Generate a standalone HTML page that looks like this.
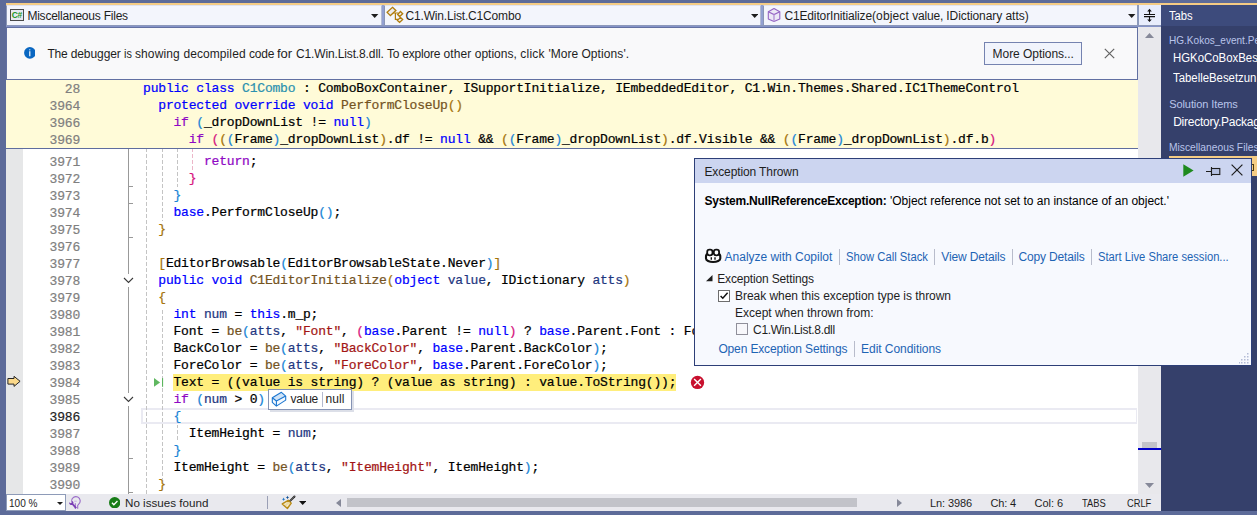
<!DOCTYPE html><html><head><meta charset="utf-8"><title>Visual Studio</title><style>
html,body{margin:0;padding:0;background:#5d6b99}
body{width:1257px;height:515px;position:relative;overflow:hidden;background:#5d6b99;font-family:'Liberation Sans', sans-serif;}
div,span,svg{position:absolute;box-sizing:border-box}
.cl span,.hl span{position:static}
.t{white-space:pre}
.ln{left:24px;width:56px;text-align:right;font:13px/17px 'Liberation Mono', monospace;letter-spacing:-0.186px;color:#7f7f7f;height:17px;-webkit-text-stroke:0.22px}
.ln.cur{color:#1e1e1e}
.cl{left:127.8px;font:13px/17px 'Liberation Mono', monospace;letter-spacing:-0.186px;white-space:pre;color:#000;height:17px;-webkit-text-stroke:0.22px}
.kw{color:#0000ff}.ctl{color:#8f08c4}.typ{color:#2b91af}.fn{color:#74531f}.var{color:#1f377f}.st{color:#a31515}
.b1{color:#a5740b}.b2{color:#1a85d6}.b3{color:#d6157e}
.hl{position:static;background:#ffee7c;display:inline-block;height:17px;margin-left:-0.700px;padding-left:0.700px}
.hl span{color:#000}
.g{width:1px;background:repeating-linear-gradient(to bottom,#b9b9b9 0 3px,transparent 3px 5px)}
.sep{width:1px;background:#b8bccb}
</style></head><body>
<div style="left:6px;top:3px;width:1251px;height:2px;background:#f5cc84"></div>
<div style="left:1161px;top:5px;width:96px;height:506px;background:#35406b"></div>
<div style="left:1161px;top:5px;width:96px;height:21px;background:#3d4b7c"></div>
<div style="left:1169px;top:156px;width:88px;height:20px;background:#f5cc84"></div>
<div style="left:1251px;top:164px;width:3px;height:7px;border:1px solid #4a3a10;border-left:none"></div>
<div style="left:6px;top:5px;width:1155px;height:21px;background:#93a0d2"></div>
<div style="left:6px;top:5px;width:376px;height:20px;background:#f3f5fc;border-left:1px solid #8a96b6;border-right:1px solid #b4bcd4;border-top:1px solid #dfe3f2"></div>
<div style="left:384px;top:5px;width:377px;height:20px;background:#f3f5fc;border-left:1px solid #8a96b6;border-right:1px solid #b4bcd4;border-top:1px solid #dfe3f2"></div>
<div style="left:763px;top:5px;width:376px;height:20px;background:#f3f5fc;border-left:1px solid #8a96b6;border-right:1px solid #b4bcd4;border-top:1px solid #dfe3f2"></div>
<div style="left:1137px;top:5px;width:2px;height:21px;background:#8b99bb"></div>
<div style="left:1139px;top:5px;width:22px;height:21px;background:#e8edfc"></div>
<div style="left:6px;top:25px;width:1155px;height:1px;background:#8c98ba"></div>
<div style="left:6px;top:26px;width:1155px;height:2px;background:#8593c8"></div>
<svg style="left:371.3px;top:14px" width="7.4" height="4" viewBox="0 0 7.4 4"><path d="M0 0h7.400L3.700 4z" fill="#1e1e1e"/></svg>
<svg style="left:750.8px;top:14px" width="7.4" height="4" viewBox="0 0 7.4 4"><path d="M0 0h7.400L3.700 4z" fill="#1e1e1e"/></svg>
<svg style="left:1128.3px;top:14px" width="7.4" height="4" viewBox="0 0 7.4 4"><path d="M0 0h7.400L3.700 4z" fill="#1e1e1e"/></svg>
<div style="left:1138px;top:27px;width:23px;height:467px;background:#e8e8ec"></div>
<div style="left:6px;top:27px;width:1132px;height:53px;background:#f9f9fa;border:1px solid #6270a2"></div>
<div style="left:984px;top:42px;width:98px;height:23px;background:#f1f4fc;border:1px solid #7583b0"></div>
<div style="left:6px;top:80px;width:1132px;height:68px;background:#fffbd8"></div>
<div style="left:6px;top:148px;width:1132px;height:1px;background:#5f6d9e"></div>
<div id="code" style="left:6px;top:149px;width:1132px;height:345px;background:#fff;overflow:hidden">
<div style="left:0;top:0;width:17px;height:345px;background:#e6e7e8"></div>
<div id="cv" style="left:-6px;top:0;width:1138px;height:345px">
<div style="left:141px;top:259px;width:996px;height:16px;border:2px solid #eaeaf2;border-right-width:1px"></div>
<div style="left:146px;top:0px;width:1px;height:345px;background:linear-gradient(to bottom,#c4c4c4 0 4px,transparent 4px 6px) 0 -1px/1px 6px repeat-y"></div>
<div style="left:162px;top:0px;width:1px;height:72px;background:linear-gradient(to bottom,#c4c4c4 0 4px,transparent 4px 6px) 0 -1px/1px 6px repeat-y"></div>
<div style="left:162px;top:159px;width:1px;height:171px;background:linear-gradient(to bottom,#c4c4c4 0 4px,transparent 4px 6px) 0 -4px/1px 6px repeat-y"></div>
<div style="left:177px;top:0px;width:1px;height:38px;background:linear-gradient(to bottom,#c4c4c4 0 4px,transparent 4px 6px) 0 -1px/1px 6px repeat-y"></div>
<div style="left:177px;top:276px;width:1px;height:17px;background:linear-gradient(to bottom,#c4c4c4 0 4px,transparent 4px 6px) 0 -1px/1px 6px repeat-y"></div>
<div style="left:192px;top:0px;width:1px;height:21px;background:linear-gradient(to bottom,#ecb6c8 0 4px,transparent 4px 6px) 0 -1px/1px 6px repeat-y"></div>
<div style="left:128px;top:0px;width:1px;height:125px;background:#999999"></div>
<div style="left:128px;top:37px;width:5px;height:1px;background:#999999"></div>
<div style="left:128px;top:54px;width:5px;height:1px;background:#999999"></div>
<div style="left:128px;top:88px;width:5px;height:1px;background:#999999"></div>
<div style="left:128px;top:138px;width:1px;height:106px;background:#999999"></div>
<div style="left:128px;top:257px;width:1px;height:88px;background:#999999"></div>
<div style="left:128px;top:309px;width:5px;height:1px;background:#999999"></div>
<div style="left:128px;top:343px;width:5px;height:1px;background:#999999"></div>
<svg style="left:123px;top:128px" width="11" height="7" viewBox="0 0 11 7"><path d="M1 1l4.5 4.5L10 1" fill="none" stroke="#3a3a3a" stroke-width="1.1"/></svg>
<svg style="left:123px;top:247px" width="11" height="7" viewBox="0 0 11 7"><path d="M1 1l4.5 4.5L10 1" fill="none" stroke="#3a3a3a" stroke-width="1.1"/></svg>
<div class="ln" style="top:-12.3px">3970</div>
<div class="ln" style="top:4.7px">3971</div>
<div class="cl" style="top:4.0px">          <span class="ctl">return</span>;</div>
<div class="ln" style="top:21.7px">3972</div>
<div class="cl" style="top:21.0px">        <span class="b3">}</span></div>
<div class="ln" style="top:38.7px">3973</div>
<div class="cl" style="top:38.0px">      <span class="b2">}</span></div>
<div class="ln" style="top:55.7px">3974</div>
<div class="cl" style="top:55.0px">      <span class="kw">base</span>.PerformCloseUp<span class="b2">()</span>;</div>
<div class="ln" style="top:72.7px">3975</div>
<div class="cl" style="top:72.0px">    <span class="b1">}</span></div>
<div class="ln" style="top:89.7px">3976</div>
<div class="ln" style="top:106.7px">3977</div>
<div class="cl" style="top:106.0px">    <span class="b1">[</span>EditorBrowsable<span class="b2">(</span>EditorBrowsableState.Never<span class="b2">)</span><span class="b1">]</span></div>
<div class="ln" style="top:123.7px">3978</div>
<div class="cl" style="top:123.0px">    <span class="kw">public void </span><span class="fn">C1EditorInitialize</span><span class="b1">(</span><span class="kw">object </span><span class="var">value</span>, IDictionary <span class="var">atts</span><span class="b1">)</span></div>
<div class="ln" style="top:140.7px">3979</div>
<div class="cl" style="top:140.0px">    <span class="b1">{</span></div>
<div class="ln" style="top:157.7px">3980</div>
<div class="cl" style="top:157.0px">      <span class="kw">int </span><span class="var">num</span> = <span class="kw">this</span>.m_p;</div>
<div class="ln" style="top:174.7px">3981</div>
<div class="cl" style="top:174.0px">      Font = <span class="fn">be</span><span class="b2">(</span><span class="var">atts</span>, <span class="st">&quot;Font&quot;</span>, <span class="b3">(</span><span class="kw">base</span>.Parent != <span class="kw">null</span><span class="b3">)</span> ? <span class="kw">base</span>.Parent.Font : Font<span class="b2">)</span>;</div>
<div class="ln" style="top:191.7px">3982</div>
<div class="cl" style="top:191.0px">      BackColor = <span class="fn">be</span><span class="b2">(</span><span class="var">atts</span>, <span class="st">&quot;BackColor&quot;</span>, <span class="kw">base</span>.Parent.BackColor<span class="b2">)</span>;</div>
<div class="ln" style="top:208.7px">3983</div>
<div class="cl" style="top:208.0px">      ForeColor = <span class="fn">be</span><span class="b2">(</span><span class="var">atts</span>, <span class="st">&quot;ForeColor&quot;</span>, <span class="kw">base</span>.Parent.ForeColor<span class="b2">)</span>;</div>
<div class="ln" style="top:225.7px">3984</div>
<div class="cl" style="top:225.0px">      <span class="hl">Text = <span class="b2">(</span><span class="b3">(</span><span class="var">value</span><span class="kw"> is string</span><span class="b3">)</span> ? <span class="b3">(</span><span class="var">value</span><span class="kw"> as string</span><span class="b3">)</span> : <span class="var">value</span>.<span class="fn">ToString</span><span class="b3">()</span><span class="b2">)</span>;</span></div>
<div class="ln" style="top:242.7px">3985</div>
<div class="cl" style="top:242.0px">      <span class="ctl">if </span><span class="b2">(</span><span class="var">num</span> &gt; 0<span class="b2">)</span></div>
<div class="ln cur" style="top:259.7px">3986</div>
<div class="cl" style="top:259.0px">      <span class="b2">{</span></div>
<div class="ln" style="top:276.7px">3987</div>
<div class="cl" style="top:276.0px">        ItemHeight = <span class="var">num</span>;</div>
<div class="ln" style="top:293.7px">3988</div>
<div class="cl" style="top:293.0px">      <span class="b2">}</span></div>
<div class="ln" style="top:310.7px">3989</div>
<div class="cl" style="top:310.0px">      ItemHeight = <span class="fn">be</span><span class="b2">(</span><span class="var">atts</span>, <span class="st">&quot;ItemHeight&quot;</span>, ItemHeight<span class="b2">)</span>;</div>
<div class="ln" style="top:327.7px">3990</div>
<div class="cl" style="top:327.0px">    <span class="b1">}</span></div>
<svg style="left:6px;top:225px" width="16" height="14" viewBox="6 374 16 14"><path d="M7.900 378.500H14V376.300L20.100 381.300 14 386.400V384.100H7.900z" fill="#fbd98a" stroke="#262626" stroke-width="1" stroke-linejoin="miter"/></svg>
<svg style="left:153px;top:228px" width="12" height="11" viewBox="153 377 12 11"><path d="M154 378.100L160.100 382.400 154 386.800z" fill="#5fb760"/><rect x="162" y="378.100" width="1.100" height="8.700" fill="#5cb55e"/></svg>
<svg style="left:690px;top:226px" width="15" height="15" viewBox="690 375 15 15"><circle cx="697.500" cy="382.450" r="6.650" fill="#c8102e"/><path d="M694.100 379.100l6.800 6.700M700.900 379.100l-6.800 6.700" stroke="#fff" stroke-width="1.400"/></svg>
</div></div>
<div class="ln" style="top:80.7px">28</div>
<div class="cl" style="top:80.0px">  <span class="kw">public class </span><span class="typ">C1Combo</span> : ComboBoxContainer, ISupportInitialize, IEmbeddedEditor, C1.Win.Themes.Shared.IC1ThemeControl</div>
<div class="ln" style="top:97.7px">3964</div>
<div class="cl" style="top:97.0px">    <span class="kw">protected override void </span><span class="fn">PerformCloseUp</span><span class="b1">()</span></div>
<div class="ln" style="top:114.7px">3966</div>
<div class="cl" style="top:114.0px">      <span class="ctl">if </span><span class="b2">(</span>_dropDownList != <span class="kw">null</span><span class="b2">)</span></div>
<div class="ln" style="top:131.7px">3969</div>
<div class="cl" style="top:131.0px">        <span class="ctl">if </span><span class="b3">(</span><span class="b1">(</span><span class="b2">(</span>Frame<span class="b2">)</span>_dropDownList<span class="b1">)</span>.df != <span class="kw">null</span> &amp;&amp; <span class="b1">(</span><span class="b2">(</span>Frame<span class="b2">)</span>_dropDownList<span class="b1">)</span>.df.Visible &amp;&amp; <span class="b1">(</span><span class="b2">(</span>Frame<span class="b2">)</span>_dropDownList<span class="b1">)</span>.df.b<span class="b3">)</span></div>
<div style="left:270px;top:391px;width:84px;height:21px;background:#dcdfe8"></div>
<div style="left:268px;top:389px;width:84px;height:21px;background:#ffffff;border:1px solid #8593b4"></div>
<svg style="left:270px;top:390px" width="18" height="18" viewBox="270 390 18 18"><path d="M272.300 397.700L281.400 392.300 285.700 396.100 276.400 401z" fill="#cfe3f7"/><path d="M272.300 397.700L276.400 401 276.400 406.100 272.300 402.300zM276.400 401L285.700 396.100 285.700 400.100 276.400 406.100z" fill="#f4f9fe"/><path d="M272.300 397.700L281.400 392.300 285.700 396.100V400.100L276.400 406.100 272.300 402.300zM272.300 397.700L276.400 401 285.700 396.100M276.400 401V406.100" fill="none" stroke="#1b76d0" stroke-width="1.100" stroke-linejoin="round"/></svg>
<div style="left:322px;top:392px;width:1px;height:15px;background:#b4bace"></div>
<div style="left:694px;top:158px;width:558px;height:208px;background:#f7f9fe;border:1px solid #2d3f78"></div>
<div style="left:695px;top:159px;width:556px;height:24px;background:#ccd5f0"></div>
<svg style="left:1182.5px;top:164px" width="11" height="13" viewBox="0 0 11 13"><path d="M0.3 0.2L10.6 6.5 0.3 12.8z" fill="#1e8a1e"/></svg>
<svg style="left:1206px;top:166px" width="15" height="11" viewBox="0 0 15 11"><path d="M0 5.5h5.5M5.5 1v9" stroke="#1e1e1e" stroke-width="1.1" fill="none"/><rect x="5.5" y="2.5" width="8.3" height="6" fill="#b6c2e2" stroke="#1e1e1e" stroke-width="1.1"/></svg>
<svg style="left:1231.200px;top:164px" width="12" height="12" viewBox="0 0 12 12"><path d="M0.6 0.6l10.8 10.8M11.4 0.6L0.6 11.4" stroke="#1e1e1e" stroke-width="1.2" fill="none"/></svg>
<svg style="left:704px;top:248px" width="19" height="16" viewBox="704 248 19 16"><path d="M706 256.500C706 253.800 707.500 253 713.100 253 718.800 253 720.300 253.800 720.300 256.500V258.400C720.300 260.400 717 262 713.100 262 709.200 262 706 260.400 706 258.400z" fill="#fff" stroke="#111" stroke-width="2.100"/><rect x="707.200" y="249.700" width="5.300" height="5.600" rx="2.300" fill="#fff" stroke="#111" stroke-width="1.800"/><rect x="713.800" y="249.700" width="5.300" height="5.600" rx="2.300" fill="#fff" stroke="#111" stroke-width="1.800"/><path d="M711.300 257.300v2.500M715 257.300v2.500" stroke="#111" stroke-width="1.400"/></svg>
<div class="sep" style="left:839px;top:249px;height:16px"></div>
<div class="sep" style="left:934px;top:249px;height:16px"></div>
<div class="sep" style="left:1012px;top:249px;height:16px"></div>
<div class="sep" style="left:1091px;top:249px;height:16px"></div>
<div class="sep" style="left:854px;top:341px;height:16px"></div>
<svg style="left:705.800px;top:274.600px" width="7" height="7" viewBox="0 0 7 7"><path d="M6.500 0v6.300H0z" fill="#1e1e1e"/></svg>
<div style="left:718px;top:290px;width:12px;height:12px;background:#fff;border:1px solid #6d6d6d"></div>
<svg style="left:720px;top:292.200px" width="9" height="8" viewBox="0 0 9 8"><path d="M0.600 3.900l2.200 2.300L7.600 0.700" fill="none" stroke="#111" stroke-width="1.500"/></svg>
<div style="left:736px;top:323px;width:12px;height:12px;background:#f7f7fb;border:1px solid #8f8f9a"></div>
<svg style="left:1239px;top:353px" width="11" height="11" viewBox="0 0 11 11"><g fill="#b4bcd6"><rect x="8" y="0" width="1.5" height="1.5"/><rect x="5" y="3" width="1.5" height="1.5"/><rect x="8" y="3" width="1.5" height="1.5"/><rect x="2" y="6" width="1.5" height="1.5"/><rect x="5" y="6" width="1.5" height="1.5"/><rect x="8" y="6" width="1.5" height="1.5"/><rect x="0" y="9" width="1" height="1.5"/><rect x="2" y="9" width="1.5" height="1.5"/><rect x="5" y="9" width="1.5" height="1.5"/><rect x="8" y="9" width="1.5" height="1.5"/></g></svg>
<div style="left:6px;top:494px;width:1155px;height:17px;background:#e9e9ee"></div>
<div style="left:6px;top:494px;width:60px;height:17px;background:#fff;border:1px solid #8e9bb8"></div>
<svg style="left:57px;top:502px" width="6" height="3" viewBox="0 0 6 3"><path d="M0 0h6L3 3z" fill="#1e1e1e"/></svg>
<svg style="left:68px;top:496px" width="14" height="14" viewBox="68 496 14 14"><path d="M71.600 500.800A4.300 4.300 0 1 1 78.700 504.200L77.700 505.400V508.700M75.300 508.700V503.300" stroke="#9a6cc8" fill="none" stroke-width="1.100"/><path d="M74.200 501.200h2.600" stroke="#c3a8e0" stroke-width="0.900"/><path d="M69.200 502.200a2.300 2.300 0 0 0 3 2.700l3.300 3.800 1.400-1.200-3.500-3.800a2.300 2.300 0 0 0-2.500-3l1 1.500-1.200 1.100z" fill="#7b3fb5"/></svg>
<svg style="left:108.800px;top:496.800px" width="11.400" height="11.400" viewBox="0 0 12 12"><circle cx="6" cy="6" r="6" fill="#177c17"/><path d="M3.100 6.100l2 2L8.900 4.300" fill="none" stroke="#fff" stroke-width="1.400"/></svg>
<div style="left:267px;top:496px;width:1px;height:13px;background:#9a9fb5"></div>
<svg style="left:280px;top:494px" width="17" height="16" viewBox="280 494 17 16"><path d="M294.500 496.500L289.900 501.100" stroke="#2b2b2b" stroke-width="2" stroke-linecap="round"/><path d="M294.300 496.700L290.300 500.700" stroke="#e6e6e6" stroke-width="0.700" stroke-dasharray="0.700 0.800"/><path d="M288.300 500.200L291.300 503.100 287.400 508.500 282.200 503.900z" fill="#ecd9a4" stroke="#b98a14" stroke-width="1.300" stroke-linejoin="round"/><path d="M284.800 504.600l1.500-1.800M286.800 506.300l1.600-2" stroke="#f7efd6" stroke-width="0.900"/><path d="M283.600 497.600l0.550 1.150 1.150 0.550-1.150 0.550-0.550 1.150-0.550-1.150-1.150-0.550 1.150-0.550z" fill="#1b74c8"/><path d="M287.500 495.800l0.550 1.150 1.150 0.550-1.150 0.550-0.550 1.150-0.550-1.150-1.150-0.550 1.150-0.550z" fill="#0f4f95"/></svg>
<svg style="left:299px;top:501px" width="7.400" height="4" viewBox="0 0 7.400 4"><path d="M0 0h7.400L3.700 4z" fill="#111"/></svg>
<svg style="left:336px;top:498.500px" width="5" height="8" viewBox="0 0 5 8"><path d="M5 0v8L0 4z" fill="#868999"/></svg>
<div style="left:347px;top:498px;width:510px;height:9px;background:#c2c3c9"></div>
<svg style="left:897px;top:498.500px" width="5" height="8" viewBox="0 0 5 8"><path d="M0 0v8l5-4z" fill="#868999"/></svg>
<div style="left:10px;top:9px;width:14px;height:12px;border:1px solid #4a4a4a;background:#e6e8f0"></div>
<span class="t" style="left:11.700px;top:9.300px;font-size:8.500px;line-height:12px;font-weight:700;color:#1c961c;letter-spacing:-0.400px">C#</span>
<svg style="left:384px;top:4px" width="24" height="22" viewBox="384 4 24 22"><g fill="#ecebee" stroke="#b07c0b" stroke-width="1.300" stroke-linejoin="miter"><path d="M392.500 7.300L395.900 10.500 390.400 15.600 387.100 12.300z"/><path d="M400.500 11.500L402.700 13.700 399.600 16.500 397.600 14.500z"/><path d="M400.500 17.400L402.700 19.500 399.600 22.400 397.400 20.400z"/></g><path d="M393.300 13h5M395.400 13v6.300h2.800" fill="none" stroke="#b07c0b" stroke-width="1.200"/></svg>
<svg style="left:763px;top:4px" width="24" height="22" viewBox="763 4 24 22"><path d="M774 8.600L779.800 11.800V18.900L774 21.400 768.300 18.900V11.800z" fill="#ece8f6" stroke="#9464c4" stroke-width="1.100" stroke-linejoin="round"/><path d="M768.300 11.800L774 14.600 779.800 11.800" fill="none" stroke="#9464c4" stroke-width="1.100"/><path d="M774 14.600V21.400" fill="none" stroke="#b99ad8" stroke-width="1.500"/></svg>
<svg style="left:1143px;top:8px" width="14" height="15" viewBox="1143 8 14 15"><path d="M1144 14.500h11M1144 16.600h11M1149.500 10v4M1149.500 17v4" stroke="#111" stroke-width="1.100" fill="none"/><path d="M1149.500 8.800l2.300 2.600h-4.600zM1149.500 22l2.300-2.600h-4.600z" fill="#111"/></svg>
<svg style="left:23.700px;top:47.100px" width="11.800" height="11.800" viewBox="0 0 12 12"><circle cx="6" cy="6" r="5.900" fill="#0a67c1"/><path d="M5.900 2.200v1.300" stroke="#fff" stroke-width="0.900"/><path d="M5.900 4.300v5.200" stroke="#fff" stroke-width="1.200"/></svg>
<svg style="left:1103.500px;top:47.800px" width="11" height="11" viewBox="0 0 11 11"><path d="M0.800 0.800l9.400 9.400M10.200 0.800L0.800 10.200" stroke="#636363" stroke-width="1.200" fill="none"/></svg>
<svg style="left:1145px;top:33.3px" width="9" height="5" viewBox="0 0 9 5"><path d="M0 5L4.5 0 9 5z" fill="#868999"/></svg>
<svg style="left:1145px;top:482.5px" width="9" height="5" viewBox="0 0 9 5"><path d="M0 0h9L4.5 5z" fill="#868999"/></svg>
<div style="left:1142px;top:441.5px;width:15px;height:6px;background:#c2c3c9"></div>
<div style="left:1138px;top:448px;width:23px;height:2px;background:#0000c8"></div>
<span class="t" style="left:27.4px;top:8.00px;font-size:12px;line-height:17px;color:#1e1e1e;font-weight:400;letter-spacing:-0.222px">Miscellaneous Files</span>
<span class="t" style="left:405.5px;top:8.00px;font-size:12px;line-height:17px;color:#1e1e1e;font-weight:400;letter-spacing:-0.175px">C1.Win.List.C1Combo</span>
<span class="t" style="left:784.4px;top:8.00px;font-size:12px;line-height:17px;color:#1e1e1e;font-weight:400;letter-spacing:-0.136px">C1EditorInitialize</span>
<span class="t" style="left:872.0px;top:8.00px;font-size:12px;line-height:17px;color:#1e1e1e;font-weight:400;letter-spacing:0.118px">(object </span>
<span class="t" style="left:912.3px;top:8.00px;font-size:12px;line-height:17px;color:#1e1e1e;font-weight:400;letter-spacing:-0.194px">value, </span>
<span class="t" style="left:946.3px;top:8.00px;font-size:12px;line-height:17px;color:#1e1e1e;font-weight:400;letter-spacing:-0.078px">IDictionary </span>
<span class="t" style="left:1005.4px;top:8.00px;font-size:12px;line-height:17px;color:#1e1e1e;font-weight:400;letter-spacing:0.011px">atts)</span>
<span class="t" style="left:47.4px;top:46.00px;font-size:12px;line-height:17px;color:#1e1e1e;font-weight:400;letter-spacing:-0.179px">The </span>
<span class="t" style="left:70.7px;top:46.00px;font-size:12px;line-height:17px;color:#1e1e1e;font-weight:400;letter-spacing:-0.083px">debugger </span>
<span class="t" style="left:124.0px;top:46.00px;font-size:12px;line-height:17px;color:#1e1e1e;font-weight:400;transform:scaleX(0.9083);transform-origin:0 0">is </span>
<span class="t" style="left:134.9px;top:46.00px;font-size:12px;line-height:17px;color:#1e1e1e;font-weight:400;letter-spacing:0.141px">showing </span>
<span class="t" style="left:183.4px;top:46.00px;font-size:12px;line-height:17px;color:#1e1e1e;font-weight:400;letter-spacing:0.089px">decompiled </span>
<span class="t" style="left:249.1px;top:46.00px;font-size:12px;line-height:17px;color:#1e1e1e;font-weight:400;letter-spacing:-0.272px">code </span>
<span class="t" style="left:277.1px;top:46.00px;font-size:12px;line-height:17px;color:#1e1e1e;font-weight:400;transform:scaleX(1.0840);transform-origin:0 0">for </span>
<span class="t" style="left:295.9px;top:46.00px;font-size:12px;line-height:17px;color:#1e1e1e;font-weight:400;letter-spacing:-0.125px">C1.Win.List.8.dll. </span>
<span class="t" style="left:386.9px;top:46.00px;font-size:12px;line-height:17px;color:#1e1e1e;font-weight:400;letter-spacing:-0.205px">To </span>
<span class="t" style="left:402.3px;top:46.00px;font-size:12px;line-height:17px;color:#1e1e1e;font-weight:400;letter-spacing:-0.188px">explore </span>
<span class="t" style="left:443.5px;top:46.00px;font-size:12px;line-height:17px;color:#1e1e1e;font-weight:400;letter-spacing:0.085px">other </span>
<span class="t" style="left:474.7px;top:46.00px;font-size:12px;line-height:17px;color:#1e1e1e;font-weight:400;letter-spacing:0.014px">options, </span>
<span class="t" style="left:520.2px;top:46.00px;font-size:12px;line-height:17px;color:#1e1e1e;font-weight:400;letter-spacing:0.271px">click </span>
<span class="t" style="left:548.5px;top:46.00px;font-size:12px;line-height:17px;color:#1e1e1e;font-weight:400;letter-spacing:-0.011px">&#x27;More </span>
<span class="t" style="left:581.4px;top:46.00px;font-size:12px;line-height:17px;color:#1e1e1e;font-weight:400;letter-spacing:0.102px">Options&#x27;.</span>
<span class="t" style="left:992.6px;top:46.00px;font-size:12px;line-height:17px;color:#1e1e1e;font-weight:400;letter-spacing:-0.055px">More Options...</span>
<span class="t" style="left:1169.3px;top:8.00px;font-size:12px;line-height:17px;color:#ffffff;font-weight:400;transform:scaleX(0.9346);transform-origin:0 0">Tabs</span>
<span class="t" style="left:1169.3px;top:33.00px;font-size:11px;line-height:15px;color:#b9c4ea;font-weight:400;transform:scaleX(0.9128);transform-origin:0 0">HG.Kokos_event.Pe</span>
<span class="t" style="left:1172.8px;top:50.00px;font-size:12px;line-height:17px;color:#ffffff;font-weight:400;transform:scaleX(0.9499);transform-origin:0 0">HGKoCoBoxBes</span>
<span class="t" style="left:1172.9px;top:70.00px;font-size:12px;line-height:17px;color:#ffffff;font-weight:400;transform:scaleX(0.9473);transform-origin:0 0">TabelleBesetzun</span>
<span class="t" style="left:1169.2px;top:97.00px;font-size:11px;line-height:15px;color:#b9c4ea;font-weight:400;letter-spacing:-0.079px">Solution Items</span>
<span class="t" style="left:1173.2px;top:114.00px;font-size:12px;line-height:17px;color:#ffffff;font-weight:400;letter-spacing:-0.254px">Directory.Packag</span>
<span class="t" style="left:1168.8px;top:140.00px;font-size:11px;line-height:15px;color:#b9c4ea;font-weight:400;transform:scaleX(0.9328);transform-origin:0 0">Miscellaneous Files</span>
<span class="t" style="left:704.4px;top:164.00px;font-size:12px;line-height:17px;color:#1e1e1e;font-weight:400;letter-spacing:-0.109px">Exception Thrown</span>
<span class="t" style="left:704.4px;top:193.00px;font-size:12px;line-height:17px;color:#000000;font-weight:700;letter-spacing:-0.199px">System.NullReferenceException:</span>
<span class="t" style="left:890.0px;top:193.00px;font-size:12px;line-height:17px;color:#000000;font-weight:400;letter-spacing:-0.008px">&#x27;Object reference not set to an instance of an object.&#x27;</span>
<span class="t" style="left:724.6px;top:249.00px;font-size:12px;line-height:17px;color:#1e64b4;font-weight:400;letter-spacing:-0.018px">Analyze with Copilot</span>
<span class="t" style="left:845.7px;top:249.00px;font-size:12px;line-height:17px;color:#1e64b4;font-weight:400;transform:scaleX(0.9385);transform-origin:0 0">Show Call Stack</span>
<span class="t" style="left:941.3px;top:249.00px;font-size:12px;line-height:17px;color:#1e64b4;font-weight:400;letter-spacing:-0.151px">View Details</span>
<span class="t" style="left:1018.4px;top:249.00px;font-size:12px;line-height:17px;color:#1e64b4;font-weight:400;letter-spacing:-0.144px">Copy Details</span>
<span class="t" style="left:1097.7px;top:249.00px;font-size:12px;line-height:17px;color:#1e64b4;font-weight:400;transform:scaleX(0.9331);transform-origin:0 0">Start Live Share session...</span>
<span class="t" style="left:717.2px;top:271.00px;font-size:12px;line-height:17px;color:#1e1e1e;font-weight:400;letter-spacing:-0.150px">Exception Settings</span>
<span class="t" style="left:735.0px;top:288.00px;font-size:12px;line-height:17px;color:#1e1e1e;font-weight:400;letter-spacing:-0.036px">Break when this exception type is thrown</span>
<span class="t" style="left:735.0px;top:305.00px;font-size:12px;line-height:17px;color:#1e1e1e;font-weight:400;letter-spacing:-0.010px">Except when thrown from:</span>
<span class="t" style="left:753.0px;top:322.00px;font-size:12px;line-height:17px;color:#1e1e1e;font-weight:400;letter-spacing:-0.283px">C1.Win.List.8.dll</span>
<span class="t" style="left:718.4px;top:341.00px;font-size:12px;line-height:17px;color:#1e64b4;font-weight:400;letter-spacing:-0.139px">Open Exception Settings</span>
<span class="t" style="left:861.1px;top:341.00px;font-size:12px;line-height:17px;color:#1e64b4;font-weight:400;letter-spacing:-0.055px">Edit Conditions</span>
<span class="t" style="left:290.5px;top:391.00px;font-size:12px;line-height:17px;color:#1e1e1e;font-weight:400;letter-spacing:-0.237px">value</span>
<span class="t" style="left:325.5px;top:391.00px;font-size:12px;line-height:17px;color:#1e1e1e;font-weight:400;letter-spacing:0.103px">null</span>
<span class="t" style="left:8.9px;top:496.00px;font-size:11px;line-height:15px;color:#1e1e1e;font-weight:400;transform:scaleX(0.9166);transform-origin:0 0">100 %</span>
<span class="t" style="left:125.2px;top:496.00px;font-size:11px;line-height:15px;color:#1e1e1e;font-weight:400;transform:scaleX(1.0572);transform-origin:0 0">No issues found</span>
<span class="t" style="left:930.1px;top:496.00px;font-size:11px;line-height:15px;color:#1e1e1e;font-weight:400;letter-spacing:-0.116px">Ln: 3986</span>
<span class="t" style="left:990.5px;top:496.00px;font-size:11px;line-height:15px;color:#1e1e1e;font-weight:400;letter-spacing:-0.139px">Ch: 4</span>
<span class="t" style="left:1034.6px;top:496.00px;font-size:11px;line-height:15px;color:#1e1e1e;font-weight:400;letter-spacing:-0.058px">Col: 6</span>
<span class="t" style="left:1082.0px;top:496.00px;font-size:11px;line-height:15px;color:#1e1e1e;font-weight:400;transform:scaleX(0.8524);transform-origin:0 0">TABS</span>
<span class="t" style="left:1126.5px;top:496.00px;font-size:11px;line-height:15px;color:#1e1e1e;font-weight:400;transform:scaleX(0.8457);transform-origin:0 0">CRLF</span>
</body></html>
